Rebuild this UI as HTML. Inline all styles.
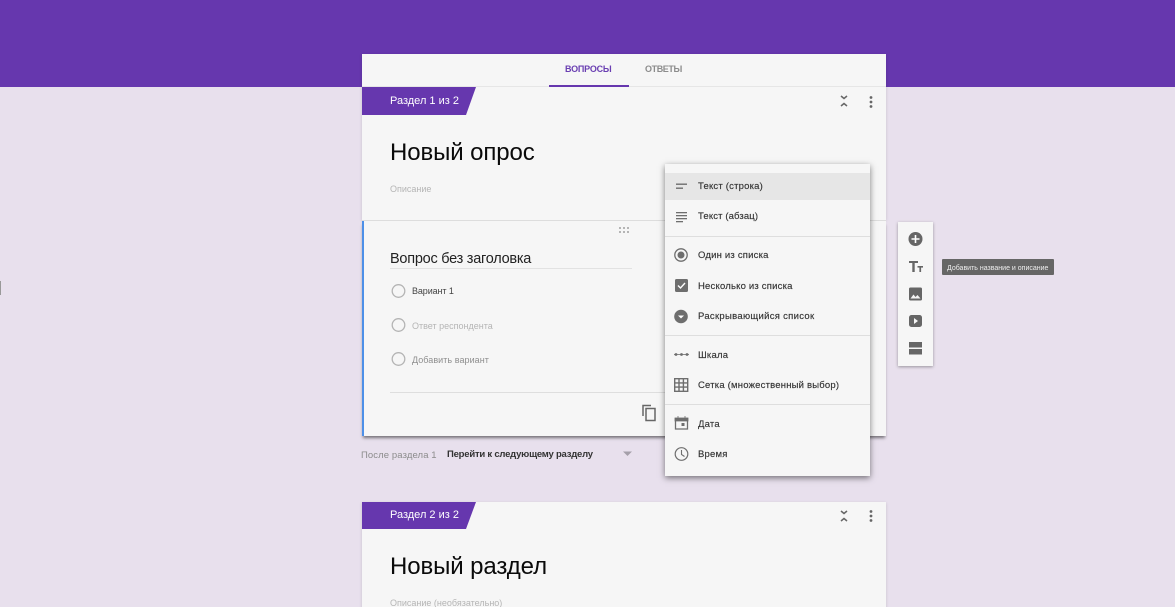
<!DOCTYPE html>
<html><head><meta charset="utf-8"><style>
html,body{margin:0;padding:0;width:1175px;height:607px;overflow:hidden}
#p{left:0;top:0;width:1175px;height:607px;overflow:hidden;background:#e8e0ed;font-family:"Liberation Sans",sans-serif}
div,span,svg{position:absolute}
.t{white-space:nowrap;line-height:1;filter:blur(.25px)}
.card{background:#f6f6f6;left:362px;width:524px}
.m{font-size:9.5px;color:#333;left:698px;letter-spacing:.2px;font-weight:400;-webkit-text-stroke:.15px #333}
.hr{left:665px;width:205px;height:1px;background:#dedede}
</style></head><body><div id="p">
<div style="left:0;top:0;width:1175px;height:87px;background:#6637ae"></div>
<div style="left:0;top:281px;width:1px;height:14px;background:#999"></div>

<div class="card" style="top:54px;height:166px;box-shadow:0 1px 3px rgba(0,0,0,.15)"></div>
<div style="left:362px;top:86px;width:524px;height:1px;background:#e6e6e6"></div>
<div class="t" style="left:565px;top:65px;font-size:9px;font-weight:bold;color:#6a3fb2;letter-spacing:-.2px">ВОПРОСЫ</div>
<div class="t" style="left:645px;top:65px;font-size:9px;font-weight:bold;color:#8c8c8c;letter-spacing:-.4px">ОТВЕТЫ</div>
<div style="left:549px;top:85px;width:80px;height:2px;background:#6637ae"></div>

<svg style="left:362px;top:87px" width="116" height="28"><path d="M0 0H114L104 28H0Z" fill="#6637ae"/></svg>
<div class="t" style="left:390px;top:96px;font-size:11px;color:#fff">Раздел 1 из 2</div>
<svg style="left:838px;top:95px" width="12" height="13"><path d="M3 1L6 3.500L9 1M3 11L6 8.500L9 11" fill="none" stroke="#666" stroke-width="1.500"/></svg>
<svg style="left:868px;top:95px" width="6" height="14"><circle cx="3" cy="2.500" r="1.400" fill="#666"/><circle cx="3" cy="7" r="1.400" fill="#666"/><circle cx="3" cy="11.500" r="1.400" fill="#666"/></svg>
<div class="t" style="left:390px;top:141px;font-size:24px;color:#0a0a0a;letter-spacing:-.1px">Новый опрос</div>
<div class="t" style="left:390px;top:185px;font-size:9px;color:#b5b5b5">Описание</div>

<div class="card" style="top:221px;height:215px;box-shadow:0 -1px 0 #ddd,0 3px 3px -1px rgba(0,0,0,.5)"></div>
<div style="left:362px;top:221px;width:2px;height:215px;background:#4d90e8"></div>
<svg style="left:618px;top:226px" width="13" height="8" fill="#b5b5b5"><rect x="1" y="1" width="2" height="2"/><rect x="5" y="1" width="2" height="2"/><rect x="9" y="1" width="2" height="2"/><rect x="1" y="5" width="2" height="2"/><rect x="5" y="5" width="2" height="2"/><rect x="9" y="5" width="2" height="2"/></svg>
<div class="t" style="left:390px;top:252px;font-size:14.500px;color:#222;letter-spacing:-.25px">Вопрос без заголовка</div>
<div style="left:390px;top:268px;width:242px;height:1px;background:#e2e2e2"></div>
<svg style="left:391px;top:284px" width="15" height="84" fill="none" stroke="#b4b4b4" stroke-width="1.300"><circle cx="7.500" cy="7" r="6.300"/><circle cx="7.500" cy="41" r="6.300"/><circle cx="7.500" cy="75" r="6.300"/></svg>
<div class="t" style="left:412px;top:287px;font-size:9px;color:#444;letter-spacing:-.1px">Вариант 1</div>
<div class="t" style="left:412px;top:322px;font-size:9px;color:#b5b5b5">Ответ респондента</div>
<div class="t" style="left:412px;top:356px;font-size:9px;color:#8f8f8f;letter-spacing:.05px">Добавить вариант</div>
<div style="left:390px;top:392px;width:275px;height:1px;background:#dedede"></div>
<svg style="left:640px;top:403px" width="18" height="20" fill="none" stroke="#666" stroke-width="1.500"><path d="M3 13V2.500H11"/><rect x="6" y="5.500" width="9" height="12"/></svg>

<div class="t" style="left:361px;top:451px;font-size:9.500px;color:#8c8c8c;letter-spacing:.1px">После раздела 1</div>
<div class="t" style="left:447px;top:450px;font-size:9.500px;color:#333;font-weight:bold;letter-spacing:-.22px">Перейти к следующему разделу</div>
<svg style="left:623px;top:451px" width="10" height="6"><path d="M0 .5H9L4.500 5Z" fill="#a5a0aa"/></svg>

<div class="card" style="top:502px;height:120px;box-shadow:0 1px 3px rgba(0,0,0,.15)"></div>
<svg style="left:362px;top:502px" width="116" height="27"><path d="M0 0H114L104 27H0Z" fill="#6637ae"/></svg>
<div class="t" style="left:390px;top:510px;font-size:11px;color:#fff">Раздел 2 из 2</div>
<svg style="left:838px;top:510px" width="12" height="13"><path d="M3 1L6 3.500L9 1M3 11L6 8.500L9 11" fill="none" stroke="#666" stroke-width="1.500"/></svg>
<svg style="left:868px;top:509px" width="6" height="14"><circle cx="3" cy="2.500" r="1.400" fill="#666"/><circle cx="3" cy="7" r="1.400" fill="#666"/><circle cx="3" cy="11.500" r="1.400" fill="#666"/></svg>
<div class="t" style="left:390px;top:555px;font-size:24px;color:#0a0a0a;letter-spacing:-.1px">Новый раздел</div>
<div class="t" style="left:390px;top:599px;font-size:9px;color:#b5b5b5">Описание (необязательно)</div>

<div style="left:665px;top:164px;width:205px;height:312px;background:#f6f6f6;box-shadow:0 2px 6px rgba(0,0,0,.5)"></div>
<div style="left:665px;top:173px;width:205px;height:27px;background:#e6e6e6"></div>
<div class="hr" style="top:236px"></div>
<div class="hr" style="top:335px"></div>
<div class="hr" style="top:404px"></div>
<div class="t m" style="top:182px">Текст (строка)</div>
<div class="t m" style="top:212px;letter-spacing:.13px">Текст (абзац)</div>
<div class="t m" style="top:251px">Один из списка</div>
<div class="t m" style="top:282px">Несколько из списка</div>
<div class="t m" style="top:312px;letter-spacing:.3px">Раскрывающийся список</div>
<div class="t m" style="top:351px">Шкала</div>
<div class="t m" style="top:381px">Сетка (множественный выбор)</div>
<div class="t m" style="top:420px">Дата</div>
<div class="t m" style="top:450px">Время</div>

<svg style="left:673px;top:178px" width="16" height="290">
<g fill="#6e6e6e">
<rect x="3" y="5.500" width="11" height="1.400"/><rect x="3" y="9.500" width="7" height="1.400"/>
<rect x="3" y="34" width="11" height="1.300"/><rect x="3" y="37" width="11" height="1.300"/><rect x="3" y="40" width="11" height="1.300"/><rect x="3" y="43" width="7" height="1.300"/>
<circle cx="8" cy="77" r="3.500"/>
<rect x="2" y="101" width="13" height="13" rx="1.500"/>
<circle cx="8" cy="138.500" r="6.800"/>
<circle cx="3" cy="176.500" r="1.400"/><circle cx="8.500" cy="176.500" r="1.400"/><circle cx="14" cy="176.500" r="1.400"/>
<rect x="1" y="176" width="15" height=".8"/>
<rect x="8.500" y="245" width="3" height="3"/>
</g>
<circle cx="8" cy="77" r="6.200" fill="none" stroke="#6e6e6e" stroke-width="1.300"/>
<path d="M5 107.500L7.500 110L12 105" fill="none" stroke="#fff" stroke-width="1.400"/>
<path d="M5 137.500H11L8 140.500Z" fill="#fff"/>
<path d="M1.700 200.700H14.700V213.300H1.700ZM1.700 204.900H14.700M1.700 209.100H14.700M6 200.700V213.300M10.400 200.700V213.300" fill="none" stroke="#6e6e6e" stroke-width="1.400"/>
<path d="M2.500 240.500H14.500V251H2.500Z" fill="none" stroke="#6e6e6e" stroke-width="1.300"/>
<path d="M2 240H15V243H2ZM5 238V241M12 238V241" fill="#6e6e6e" stroke="#6e6e6e" stroke-width=".8"/>
<circle cx="8.500" cy="276" r="6.300" fill="none" stroke="#6e6e6e" stroke-width="1.200"/>
<path d="M8.500 272V276.500L11.500 278.500" fill="none" stroke="#6e6e6e" stroke-width="1.100"/>
</svg>

<div style="left:898px;top:222px;width:35px;height:144px;background:#f6f6f6;box-shadow:0 1px 3px rgba(0,0,0,.35)"></div>
<svg style="left:906px;top:230px" width="20" height="128">
<circle cx="9.500" cy="9" r="7" fill="#666"/><path d="M9.500 5V13M5.500 9H13.500" stroke="#fff" stroke-width="1.600"/>
<g fill="#666"><rect x="3" y="31" width="9" height="2"/><rect x="6.300" y="31" width="2.400" height="11"/><rect x="11.500" y="36" width="5.500" height="1.600"/><rect x="13.400" y="36" width="1.700" height="6"/></g>
<rect x="3" y="57.500" width="13" height="13" rx="1.500" fill="#666"/><path d="M4.500 68.500L7.500 64.500L9.500 67L11.500 65L14.500 68.500Z" fill="#f6f6f6"/>
<rect x="3" y="85" width="13" height="12" rx="2.500" fill="#666"/><path d="M8 88V94L12 91Z" fill="#f6f6f6"/>
<rect x="3" y="112" width="13" height="5.500" fill="#666"/><rect x="3" y="119" width="13" height="5.500" fill="#666"/>
</svg>

<div style="left:942px;top:259px;width:112px;height:16px;background:#666;border-radius:1px"></div>
<div class="t" style="left:947px;top:264.500px;font-size:7px;color:#eee">Добавить название и описание</div>
</div></body></html>
